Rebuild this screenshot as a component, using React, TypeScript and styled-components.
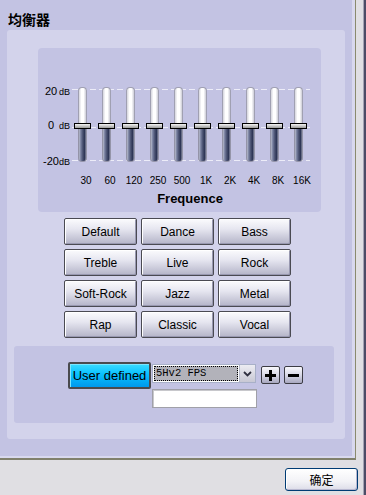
import React from 'react';
import styled, { createGlobalStyle } from 'styled-components';

const Global = createGlobalStyle`
  html, body { margin: 0; padding: 0; }
  body {
    width: 366px; height: 495px; overflow: hidden;
    background: #e0dfe3;
    font-family: "Liberation Sans", Arial, sans-serif;
  }
`;

const Window = styled.div`
  width: 366px;
  height: 495px;
  box-sizing: border-box;
  background: #e0dfe3;
  border-right: 2px solid #4c4c66;
  display: flex;
  flex-direction: column;
`;

const Frame = styled.div`
  flex: 1;
  display: flex;
  flex-direction: column;
  border-right: 1px solid #a4a4b4;
`;

const Sheet = styled.div`
  width: 356px;
  height: 460px;
  box-sizing: border-box;
  border-right: 1px solid #8a8a6e;
  border-bottom: 2px solid #80806c;
  display: flex;
`;

const Panel = styled.div`
  flex: 1;
  background: #c3c3e3;
  border-right: 3px solid #d8d8ee;
  border-bottom: 2px solid #d8d8ee;
  padding: 10px 0 0 7px;
  display: flex;
  flex-direction: column;
`;

const Title = styled.div`
  height: 20px;
  margin-left: 1px;
  font-family: "Noto Sans CJK SC", sans-serif;
  font-weight: 700;
  font-size: 14px;
  line-height: 18px;
  color: #000;
`;

const Card = styled.div`
  width: 338px;
  height: 409px;
  box-sizing: border-box;
  background: #d3d3eb;
  border-radius: 3px;
  padding-top: 18px;
  display: flex;
  flex-direction: column;
`;

const EqPanel = styled.div`
  width: 283px;
  height: 164px;
  margin-left: 31px;
  box-sizing: border-box;
  background: #c3c3e3;
  border-radius: 4px;
  padding: 36px 0 0 4px;
  display: flex;
`;

const ScaleColumn = styled.div`
  width: 28px;
  height: 82px;
  display: flex;
  flex-direction: column;
`;

const ScaleLabel = styled.div<{ $top: number; $indent: number; $numWidth: number }>`
  display: flex;
  align-items: baseline;
  margin-top: ${p => p.$top}px;
  padding-left: ${p => p.$indent}px;
  height: 12px;
  line-height: 12px;
  white-space: nowrap;
  color: #000;
  & > b {
    font-weight: 400;
    font-size: 11px;
    width: ${p => p.$numWidth}px;
  }
  & > i {
    font-style: normal;
    font-size: 9px;
  }
`;

const Chart = styled.div`
  width: 240px;
  display: flex;
  flex-direction: column;
`;

const SliderArea = styled.div`
  height: 82px;
  display: grid;
  grid-template-columns: repeat(10, 24px);
  background-image:
    repeating-linear-gradient(to right, #ececf8 0 6px, transparent 6px 9px),
    repeating-linear-gradient(to right, #ececf8 0 6px, transparent 6px 9px),
    repeating-linear-gradient(to right, #ececf8 0 6px, transparent 6px 9px);
  background-size: 238px 1px;
  background-position: 2px 5px, 2px 43px, 2px 76px;
  background-repeat: no-repeat;
`;

const SliderCol = styled.div`
  position: relative;
  display: flex;
  justify-content: center;
  padding-top: 3px;
`;

const Track = styled.div`
  width: 9px;
  height: 75px;
  display: flex;
  flex-direction: column;
`;

const TrackUpper = styled.div`
  height: 38px;
  box-sizing: border-box;
  border-radius: 4px 4px 0 0;
  border: 1px solid #a0a0b2;
  border-bottom: none;
  background: linear-gradient(to right, #d4d4dc 0, #ffffff 35%, #ffffff 65%, #ccccd6 100%);
`;

const TrackLower = styled.div`
  flex: 1;
  box-sizing: border-box;
  border-radius: 0 0 4px 4px;
  border: 1px solid #9494a8;
  border-top: none;
  background: linear-gradient(to right, #b8bccc 0, #7880a0 25%, #485070 55%, #283050 85%, #9ca0b4 100%);
`;

const Thumb = styled.div`
  position: absolute;
  top: 39px;
  left: 50%;
  width: 17px;
  height: 6px;
  margin-left: -8px;
  box-sizing: border-box;
  border: 1px solid #000;
  background: linear-gradient(#f4f4f4, #c8c8c8 50%, #9c9c9c);
`;

const FreqRow = styled.div`
  margin-top: 9px;
  padding-left: 4px;
  display: grid;
  grid-template-columns: repeat(10, 24px);
`;

const FreqLabel = styled.div`
  text-align: center;
  font-size: 10px;
  line-height: 12px;
  color: #000;
  white-space: nowrap;
`;

const AxisTitle = styled.div`
  margin-top: 4px;
  text-align: center;
  font-weight: 700;
  font-size: 13px;
  line-height: 15px;
  color: #000;
`;

const PresetGrid = styled.div`
  margin: 6px 0 0 57px;
  display: grid;
  grid-template-columns: repeat(3, 73px);
  grid-auto-rows: 27px;
  column-gap: 4px;
  row-gap: 4px;
`;

const PresetButton = styled.button`
  box-sizing: border-box;
  margin: 0;
  padding: 0;
  border: 1px solid #4a4a52;
  border-radius: 2px;
  box-shadow: inset 1px 1px 0 #ffffff, inset -1px -1px 0 #9898b0;
  background: linear-gradient(#fbfbfd, #e6e6f0 40%, #b4b4c8);
  font-family: "Liberation Sans", Arial, sans-serif;
  font-size: 12px;
  color: #000;
  display: flex;
  align-items: center;
  justify-content: center;
`;

const UserPanel = styled.div`
  width: 320px;
  height: 77px;
  margin: 8px 0 0 7px;
  box-sizing: border-box;
  background: #c3c3e3;
  border-radius: 3px;
  padding: 16px 0 0 54px;
  display: flex;
  align-items: flex-start;
`;

const UserButton = styled.button`
  width: 83px;
  height: 27px;
  box-sizing: border-box;
  margin: 0;
  padding: 0;
  border: 2px solid #4a4a4e;
  border-radius: 2px;
  background: linear-gradient(#3cdcff, #08c0ff 45%, #0098ec);
  box-shadow: inset 1px 1px 0 #7ae6ff;
  font-family: "Liberation Sans", Arial, sans-serif;
  font-size: 13px;
  color: #000;
  display: flex;
  align-items: center;
  justify-content: center;
`;

const EditColumn = styled.div`
  margin-left: 1px;
  display: flex;
  flex-direction: column;
`;

const SelectRow = styled.div`
  margin-top: 2px;
  display: flex;
  align-items: flex-start;
`;

const SelectBox = styled.div`
  width: 104px;
  height: 19px;
  box-sizing: border-box;
  border: 1px solid #a8b0c8;
  background: #fff;
  display: flex;
`;

const SelectValue = styled.div`
  flex: 1;
  margin: 1px;
  box-sizing: border-box;
  border: 1px dotted #000;
  background: #b2b2ba;
  font-family: "Liberation Mono", "Courier New", monospace;
  font-size: 10.5px;
  line-height: 13px;
  padding-left: 1px;
  color: #000;
  white-space: nowrap;
  overflow: hidden;
`;

const SelectArrow = styled.div`
  width: 16px;
  box-sizing: border-box;
  background: linear-gradient(#ececf2, #c8c8d4);
  border-left: 1px solid #b8bccc;
  display: flex;
  align-items: center;
  justify-content: center;
`;

const SmallButton = styled.button<{ $gap: number }>`
  width: 19px;
  height: 18px;
  margin: 2px 0 0 ${p => p.$gap}px;
  padding: 0;
  box-sizing: border-box;
  border: 1px solid #3c3c44;
  border-radius: 2px;
  background: linear-gradient(#f8f8fc, #d8d8e6 50%, #a8a8c0);
  display: flex;
  align-items: center;
  justify-content: center;
`;

const NameInput = styled.div`
  width: 105px;
  height: 19px;
  margin-top: 5px;
  box-sizing: border-box;
  border: 1px solid #a0a0a8;
  box-shadow: inset 1px 1px 0 #c8c8cc;
  background: #fff;
`;

const Footer = styled.div`
  flex: 1;
  display: flex;
  justify-content: flex-end;
  align-items: flex-start;
  padding: 8px 5px 0 0;
`;

const OkButton = styled.button`
  width: 73px;
  height: 23px;
  margin: 0;
  padding: 0;
  box-sizing: border-box;
  border: 1px solid #003c74;
  border-radius: 3px;
  background: linear-gradient(#ffffff, #f2f2f6 60%, #dcdce8);
  box-shadow: inset -1px -1px 0 #b8b8d0, inset 1px 1px 0 #ffffff;
  font-family: "Noto Sans CJK SC", sans-serif;
  font-size: 12px;
  color: #000;
  display: flex;
  align-items: center;
  justify-content: center;
`;

const freqs = ['30', '60', '120', '250', '500', '1K', '2K', '4K', '8K', '16K'];
const presets = [
  'Default', 'Dance', 'Bass',
  'Treble', 'Live', 'Rock',
  'Soft-Rock', 'Jazz', 'Metal',
  'Rap', 'Classic', 'Vocal',
];

export default function App() {
  return (
    <>
      <Global />
      <Window>
        <Frame>
          <Sheet>
            <Panel>
              <Title>均衡器</Title>
              <Card>
                <EqPanel>
                  <ScaleColumn>
                    <ScaleLabel $top={1} $indent={3} $numWidth={16}><b>20</b><i>dB</i></ScaleLabel>
                    <ScaleLabel $top={22} $indent={6} $numWidth={13}><b>0</b><i>dB</i></ScaleLabel>
                    <ScaleLabel $top={24} $indent={1} $numWidth={16}><b>-20</b><i>dB</i></ScaleLabel>
                  </ScaleColumn>
                  <Chart>
                    <SliderArea>
                      {freqs.map(f => (
                        <SliderCol key={f}>
                          <Track>
                            <TrackUpper />
                            <TrackLower />
                          </Track>
                          <Thumb />
                        </SliderCol>
                      ))}
                    </SliderArea>
                    <FreqRow>
                      {freqs.map(f => <FreqLabel key={f}>{f}</FreqLabel>)}
                    </FreqRow>
                    <AxisTitle>Frequence</AxisTitle>
                  </Chart>
                </EqPanel>
                <PresetGrid>
                  {presets.map(p => <PresetButton key={p}>{p}</PresetButton>)}
                </PresetGrid>
                <UserPanel>
                  <UserButton>User defined</UserButton>
                  <EditColumn>
                    <SelectRow>
                      <SelectBox>
                        <SelectValue>5Hv2 FPS</SelectValue>
                        <SelectArrow>
                          <svg width="9" height="6" viewBox="0 0 9 6">
                            <path d="M1 1 L4.5 4.5 L8 1" fill="none" stroke="#303040" strokeWidth="1.8" />
                          </svg>
                        </SelectArrow>
                      </SelectBox>
                      <SmallButton $gap={5}>
                        <svg width="11" height="11" viewBox="0 0 11 11">
                          <rect x="4" y="0" width="3" height="11" fill="#000" />
                          <rect x="0" y="4" width="11" height="3" fill="#000" />
                        </svg>
                      </SmallButton>
                      <SmallButton $gap={4}>
                        <svg width="11" height="3" viewBox="0 0 11 3">
                          <rect x="0" y="0" width="11" height="3" fill="#000" />
                        </svg>
                      </SmallButton>
                    </SelectRow>
                    <NameInput />
                  </EditColumn>
                </UserPanel>
              </Card>
            </Panel>
          </Sheet>
          <Footer>
            <OkButton>确定</OkButton>
          </Footer>
        </Frame>
      </Window>
    </>
  );
}
